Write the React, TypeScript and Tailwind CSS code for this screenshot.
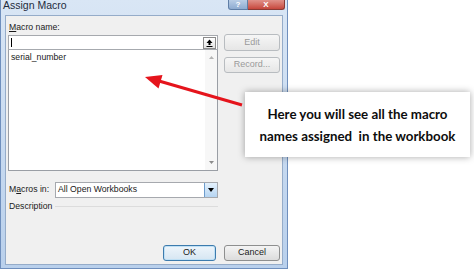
import React from 'react';

const dlgFont = { fontFamily: '"Liberation Sans", Arial, sans-serif' };

const Btn: React.FC<{ label: React.ReactNode; disabled?: boolean; primary?: boolean; className?: string }> = ({
  label,
  disabled,
  primary,
  className = '',
}) => (
  <div
    className={`flex items-center justify-center rounded-[3px] border text-[9px] ${
      disabled
        ? 'border-[#b8bcc0] bg-gradient-to-b from-[#f6f6f6] to-[#e6e6e6] text-[#9a9a9a]'
        : primary
        ? 'border-[#3d7bad] bg-gradient-to-b from-[#eef5fb] to-[#d6e6f2] text-[#1a1a1a] shadow-[inset_0_0_0_1px_#bfe0f5]'
        : 'border-[#8e8f8f] bg-gradient-to-b from-[#f4f4f4] to-[#dcdcdc] text-[#1a1a1a]'
    } ${className}`}
  >
    {label}
  </div>
);

const App: React.FC = () => {
  return (
    <div className="relative w-[474px] h-[272px] overflow-hidden bg-white" style={dlgFont}>
      {/* dialog window */}
      <div className="flex flex-col w-[288px] h-[269px] bg-gradient-to-b from-[#d9e6f5] to-[#b9d0ec] border-x border-b border-[#6f8fbd] px-[4px] pb-[3px]">
        <div className="flex h-[15px] items-start justify-between">
          <span className="-mt-[1px] ml-[-2px] text-[10.5px] leading-[12px] text-[#1e2b3c]">Assign Macro</span>
          <div className="flex mr-[-2px]">
            <div className="flex h-[10px] w-[20px] items-end justify-center rounded-bl-[3px] border border-t-0 border-[#5f7ea6] bg-gradient-to-b from-[#b9cde6] to-[#8eabd0]">
              <span className="text-[8px] leading-[8px] font-bold text-white">?</span>
            </div>
            <div className="flex h-[10px] w-[37px] items-end justify-center rounded-br-[3px] border border-l-0 border-t-0 border-[#8a3a34] bg-gradient-to-b from-[#e0918a] to-[#c6463c]">
              <span className="text-[8px] leading-[8px] font-bold text-white">X</span>
            </div>
          </div>
        </div>

        <div className="flex flex-1 flex-col border border-[#95acc9] bg-[#f0f0f0] px-[2px] pt-[6px] pb-[3px] text-[#1a1a1a]">
          <div className="text-[8.7px] leading-[11px] pl-[1px]">
            <span className="underline">M</span>acro name:
          </div>

          <div className="flex mt-[2px]">
            <div className="flex w-[210px] flex-col">
              <div className="flex h-[15px] items-center border border-[#a6a9ae] bg-white pl-[2px] pr-[1px]">
                <div className="h-[9px] w-px bg-black" />
                <div className="flex-1" />
                <div className="flex h-[12px] w-[13px] items-center justify-center border border-[#8b8b8b] bg-gradient-to-b from-white to-[#e4e4e4]">
                  <svg width="7" height="8" viewBox="0 0 7 8">
                    <path d="M3.5 0.5 L6.5 4 L4.5 4 L4.5 6 L2.5 6 L2.5 4 L0.5 4 Z" fill="#000" />
                    <rect x="0.5" y="7" width="6" height="1" fill="#000" />
                  </svg>
                </div>
              </div>
              <div className="flex h-[121px] border border-t-0 border-[#9a9ea5] bg-white">
                <div className="flex-1 pl-[2px] pt-[2px] text-[8.7px] leading-[11px]">serial_number</div>
                <div className="flex w-[12px] flex-col items-center justify-between bg-[#f7f7f7] py-[6px]">
                  <svg width="5" height="3" viewBox="0 0 5 3">
                    <path d="M0 3 L2.5 0 L5 3 Z" fill="#b4b4b4" />
                  </svg>
                  <svg width="5" height="3" viewBox="0 0 5 3">
                    <path d="M0 0 L2.5 3 L5 0 Z" fill="#8c8c8c" />
                  </svg>
                </div>
              </div>
            </div>
            <div className="ml-[6px] flex w-[56px] flex-col -mt-[1px]">
              <Btn label="Edit" disabled className="h-[17px]" />
              <Btn label="Record..." disabled className="mt-[6px] h-[16px]" />
            </div>
          </div>

          <div className="mt-[11px] flex h-[16px] w-[210px] items-center">
            <div className="w-[47px] text-[8.7px] pl-[1px]">
              M<span className="underline">a</span>cros in:
            </div>
            <div className="flex h-[16px] flex-1 items-center border border-[#a6a9ae] bg-white pl-[2px]">
              <span className="flex-1 text-[8.7px]">All Open Workbooks</span>
              <div className="flex h-[14px] w-[13px] items-center justify-center border-l border-[#6d9ccc] bg-gradient-to-b from-[#e4f1fc] to-[#b6d5f2]">
                <svg width="6" height="4" viewBox="0 0 6 4">
                  <path d="M0 0 L6 0 L3 4 Z" fill="#000" />
                </svg>
              </div>
            </div>
          </div>

          <div className="mt-[3px] flex w-[210px] items-center">
            <span className="text-[8.7px] leading-[11px] pl-[1px]">Description</span>
            <div className="ml-[3px] h-px flex-1 bg-[#dcdcdc]" />
          </div>

          <div className="flex-1" />

          <div className="flex">
            <div className="flex w-[210px] justify-end">
              <Btn label="OK" primary className="h-[16px] w-[53px] mr-[2px]" />
            </div>
            <Btn label="Cancel" className="ml-[6px] h-[16px] w-[56px]" />
          </div>
        </div>
      </div>

      {/* callout */}
      <div className="absolute left-[245px] top-[92px] flex h-[65px] w-[225px] flex-col items-center justify-center bg-white shadow-[0_0_7px_rgba(0,0,0,0.35)]">
        <div
          className="text-center text-[13.3px] font-bold leading-[22px] text-[#0d0d0d] whitespace-pre"
          style={{ fontFamily: 'Lato, "Open Sans", sans-serif' }}
        >
          {'Here you will see all the macro\nnames assigned  in the workbook'}
        </div>
      </div>

      {/* red arrow */}
      <svg className="absolute left-0 top-0" width="474" height="272" viewBox="0 0 474 272">
        <line x1="242" y1="105" x2="159" y2="81" stroke="#e5141c" strokeWidth="3" />
        <polygon points="145,77 162.5,75 158.5,88.5" fill="#e5141c" />
      </svg>
    </div>
  );
};

export default App;
